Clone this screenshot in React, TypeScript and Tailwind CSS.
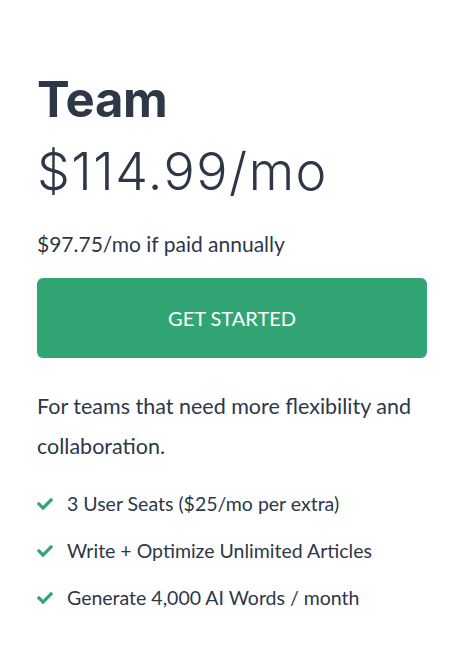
import { FaCheck } from "react-icons/fa";

const features = [
  "3 User Seats ($25/mo per extra)",
  "Write + Optimize Unlimited Articles",
  "Generate 4,000 AI Words / month",
];

export default function App() {
  return (
    <div className="min-h-[661px] w-[460px] bg-white text-[#2d3748]">
      <div className="px-[37px] pt-[70px]">
        <h2 className="font-['Inter',sans-serif] text-[49px] font-bold leading-[60px] tracking-[-0.3px]">
          Team
        </h2>
        <p className="mt-[12px] font-['Inter',sans-serif] text-[52px] font-light leading-[60px] tracking-[1.5px]">
          $114.99/mo
        </p>
        <p className="mt-[29px] font-['Lato',sans-serif] text-[21px] leading-[26px]">
          $97.75/mo if paid annually
        </p>
        <button className="mt-[21px] flex h-[80px] w-[390px] items-center justify-center rounded-[6px] bg-[#31a574] font-['Lato',sans-serif] text-[20px] text-white">
          GET STARTED
        </button>
        <p className="mt-[28px] font-['Lato',sans-serif] text-[21.5px] leading-[40px]">
          For teams that need more flexibility and collaboration.
        </p>
        <ul className="mt-[25px] flex flex-col gap-[21px] font-['Lato',sans-serif] text-[19.5px] leading-[26px]">
          {features.map((f) => (
            <li key={f} className="flex items-center gap-[14px]">
              <FaCheck className="h-[16px] w-[16px] text-[#31a574]" />
              <span>{f}</span>
            </li>
          ))}
        </ul>
      </div>
    </div>
  );
}
